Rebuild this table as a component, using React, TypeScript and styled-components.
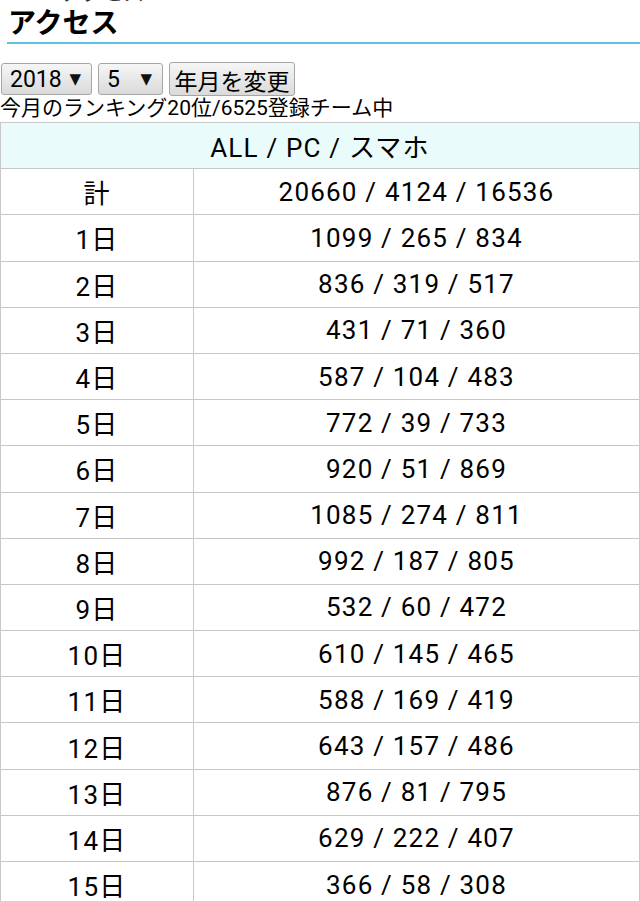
import React from "react";
import styled, { createGlobalStyle } from "styled-components";

interface DayRow {
  label: string;
  all: number;
  pc: number;
  sp: number;
}

const rows: DayRow[] = [
  { label: "計", all: 20660, pc: 4124, sp: 16536 },
  { label: "1日", all: 1099, pc: 265, sp: 834 },
  { label: "2日", all: 836, pc: 319, sp: 517 },
  { label: "3日", all: 431, pc: 71, sp: 360 },
  { label: "4日", all: 587, pc: 104, sp: 483 },
  { label: "5日", all: 772, pc: 39, sp: 733 },
  { label: "6日", all: 920, pc: 51, sp: 869 },
  { label: "7日", all: 1085, pc: 274, sp: 811 },
  { label: "8日", all: 992, pc: 187, sp: 805 },
  { label: "9日", all: 532, pc: 60, sp: 472 },
  { label: "10日", all: 610, pc: 145, sp: 465 },
  { label: "11日", all: 588, pc: 169, sp: 419 },
  { label: "12日", all: 643, pc: 157, sp: 486 },
  { label: "13日", all: 876, pc: 81, sp: 795 },
  { label: "14日", all: 629, pc: 222, sp: 407 },
  { label: "15日", all: 366, pc: 58, sp: 308 },
];

const GlobalStyle = createGlobalStyle`
  body {
    margin: 0;
    background: #fff;
    color: #000;
    font-family: Roboto, "Noto Sans CJK JP", sans-serif;
  }
`;

const App: React.FC = () => {
  return (
    <>
      <GlobalStyle />
      <Page>
        <Breadcrumb>
          <CrumbLink href="#">TOP</CrumbLink> &gt; アクセス
        </Breadcrumb>
        <Heading>アクセス</Heading>

        <Controls>
          <SelectBox $width={91}>
            <Select defaultValue="2018">
              <option value="2018">2018</option>
            </Select>
            <Arrow>▼</Arrow>
          </SelectBox>
          <SelectBox $width={65}>
            <Select defaultValue="5">
              <option value="5">5</option>
            </Select>
            <Arrow>▼</Arrow>
          </SelectBox>
          <ChangeButton type="button">年月を変更</ChangeButton>
        </Controls>
        <Ranking>今月のランキング20位/6525登録チーム中</Ranking>

        <Table>
          <colgroup>
            <col style={{ width: 193 }} />
            <col />
          </colgroup>
          <tbody>
            <tr>
              <Cell colSpan={2} $head>
                ALL / PC / スマホ
              </Cell>
            </tr>
            {rows.map((row) => (
              <tr key={row.label}>
                <Cell>{row.label}</Cell>
                <Cell>
                  {row.all} / {row.pc} / {row.sp}
                </Cell>
              </tr>
            ))}
          </tbody>
        </Table>
      </Page>
    </>
  );
};

const Page = styled.div`
  margin-top: -19px;
`;

const Breadcrumb = styled.div`
  font-size: 21px;
  line-height: 24px;
  color: #333;
`;

const CrumbLink = styled.a`
  color: #1a55c8;
  text-decoration: none;
`;

const Heading = styled.h1`
  margin: 0 0 0 7px;
  padding: 4px 0 3px 1px;
  font-size: 28px;
  font-weight: 700;
  line-height: 30px;
  border-bottom: 2px solid #5bc3df;
`;

const Controls = styled.div`
  display: flex;
  align-items: center;
  gap: 6px;
  margin: 18px 0 0 1px;
`;

const SelectBox = styled.label<{ $width: number }>`
  display: flex;
  align-items: center;
  gap: 6px;
  box-sizing: border-box;
  width: ${(p) => p.$width}px;
  height: 32px;
  padding: 0 10px 0 8px;
  border: 1px solid #a6a6a6;
  border-radius: 3px;
  background: linear-gradient(#f6f6f6, #dadada);
`;

const Select = styled.select`
  flex: 1;
  min-width: 0;
  appearance: none;
  border: none;
  background: transparent;
  padding: 0;
  font-family: Roboto, sans-serif;
  font-size: 23px;
  color: #000;
  outline: none;
`;

const Arrow = styled.span`
  font-family: "DejaVu Sans", sans-serif;
  font-size: 15px;
  color: #111;
`;

const ChangeButton = styled.button`
  box-sizing: border-box;
  width: 126px;
  height: 34px;
  padding: 0;
  border: 1px solid #a6a6a6;
  border-radius: 3px;
  background: linear-gradient(#f6f6f6, #dadada);
  font-family: Roboto, "Noto Sans CJK JP", sans-serif;
  font-size: 23px;
  color: #000;
`;

const Ranking = styled.div`
  font-size: 21px;
  line-height: 24px;
  margin-bottom: 2px;
`;

const Table = styled.table`
  width: 640px;
  border-collapse: collapse;
  table-layout: fixed;
`;

const Cell = styled.td<{ $head?: boolean }>`
  height: 45.2px;
  padding: 0;
  border: 1px solid #c8c8c8;
  background: ${(p) => (p.$head ? "#eafbfb" : "#fff")};
  text-align: center;
  font-size: 26px;
  letter-spacing: 1.2px;
`;

export default App;
